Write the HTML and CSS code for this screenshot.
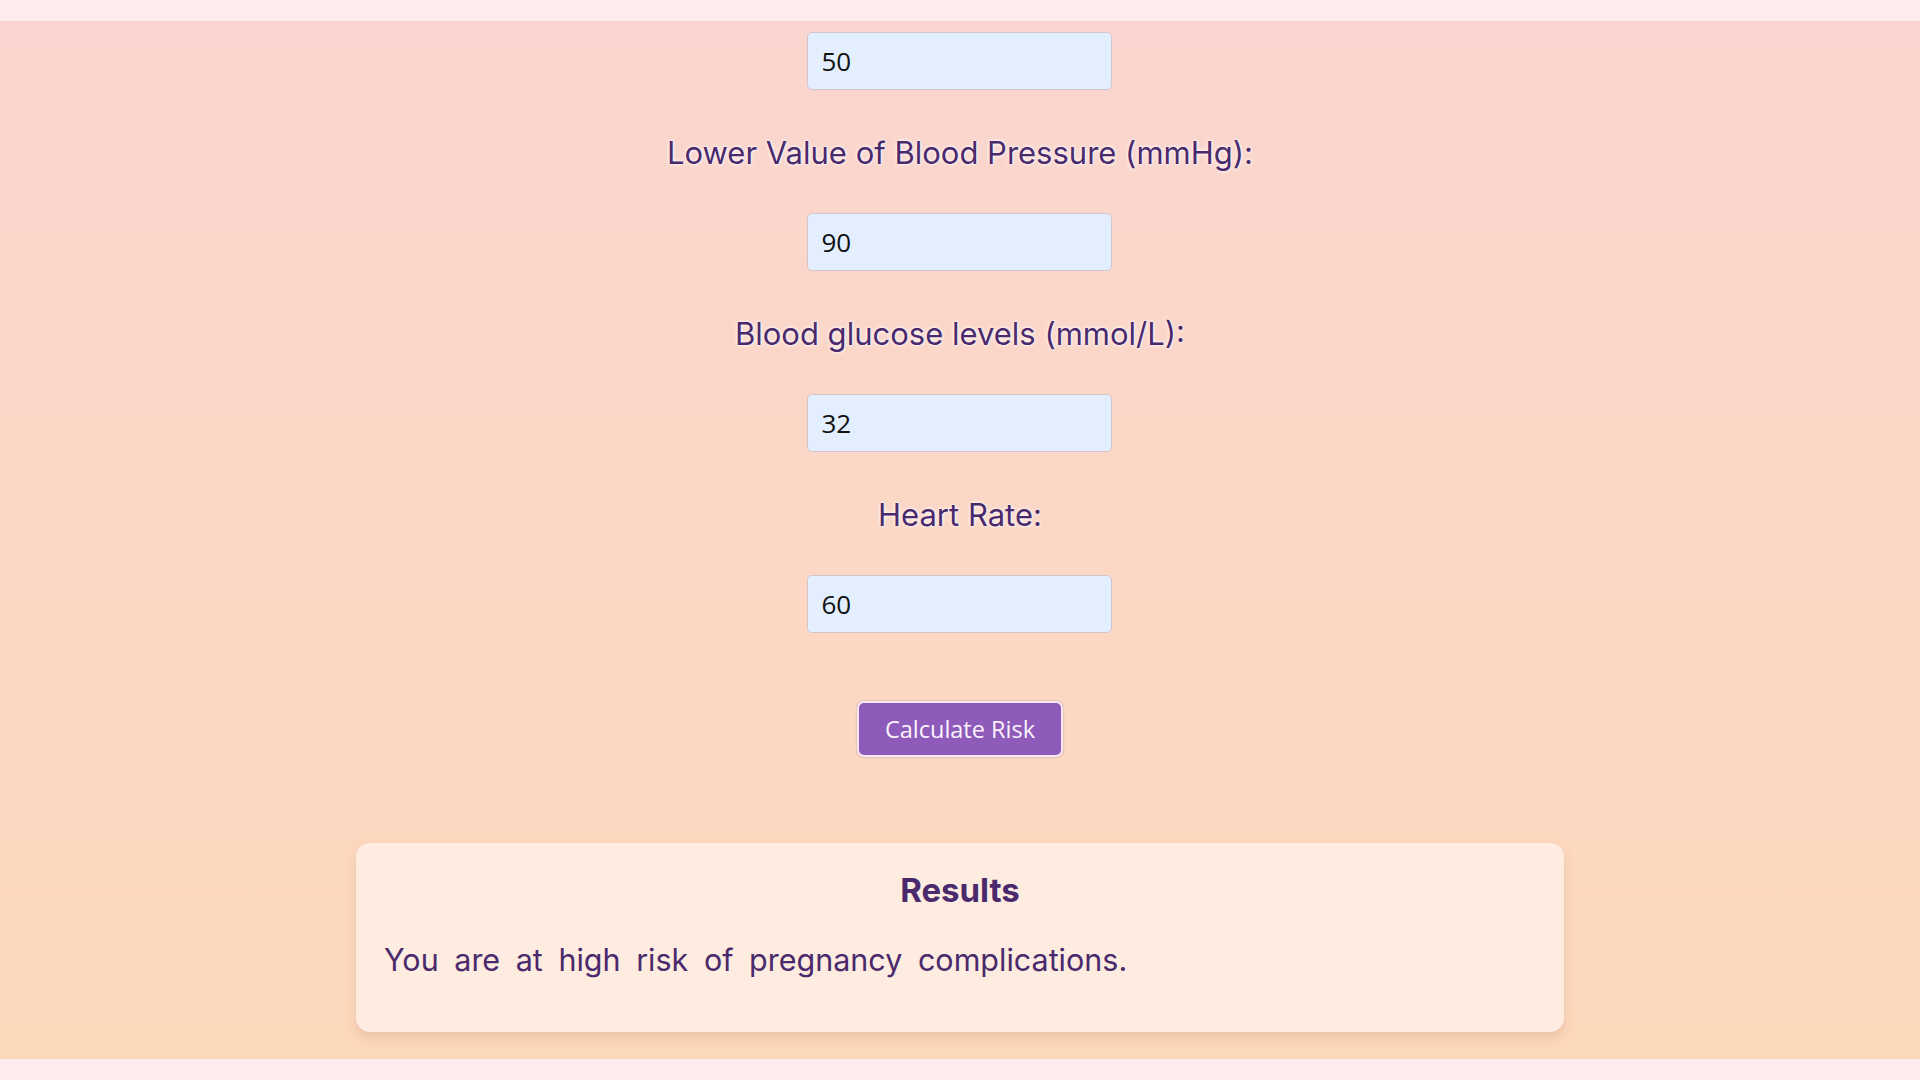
FILE: index.html
```html
<!DOCTYPE html>
<html lang="en">
<head>
<meta charset="utf-8">
<title>Pregnancy Risk Calculator</title>
<link rel="stylesheet" href="styles.css">
</head>
<body>
<main class="page">
  <form class="form" onsubmit="return false;">
    <input class="field" type="text" value="50">
    <label class="label">Lower Value of Blood Pressure (mmHg):</label>
    <input class="field" type="text" value="90">
    <label class="label">Blood glucose levels (mmol/L):</label>
    <input class="field" type="text" value="32">
    <label class="label">Heart Rate:</label>
    <input class="field" type="text" value="60">
    <button class="btn" type="button">Calculate Risk</button>
  </form>
  <section class="results">
    <h2 class="results-title">Results</h2>
    <p class="results-text">You are at high risk of pregnancy complications.</p>
  </section>
</main>
</body>
</html>
```

FILE: styles.css
```css
html, body {
  margin: 0;
  padding: 0;
}
body {
  background: #fdebee;
  padding: 21px 0;
  font-family: "Inter", "Noto Sans", sans-serif;
}
.page {
  height: 1038px;
  box-sizing: border-box;
  background: linear-gradient(180deg, #fad5cf 0%, #fdd9bc 100%);
  display: flex;
  flex-direction: column;
  align-items: center;
  padding-top: 11px;
}
.form {
  display: flex;
  flex-direction: column;
  align-items: center;
}
.field {
  box-sizing: border-box;
  width: 305px;
  height: 58px;
  margin: 0;
  padding: 0 13px;
  border: 1px solid #d2c6cc;
  border-radius: 5px;
  background: #e3efff;
  font-family: "Open Sans", "Noto Sans", sans-serif;
  font-size: 26px;
  color: #111;
  outline: none;
}
.label {
  display: block;
  margin: 46px 0 43px;
  line-height: 34px;
  font-size: 31px;
  color: #4a2a6c;
  text-shadow: 0 0 4px #fff, 0 0 2px #fff;
}
.btn {
  margin-top: 68px;
  width: 206px;
  height: 56px;
  box-sizing: border-box;
  border: 2px solid #f6e8f2;
  border-radius: 7px;
  background: #8e5bbb;
  color: #fbf3fb;
  font-family: "Open Sans", "Noto Sans", sans-serif;
  font-size: 23.5px;
  box-shadow: 0 0 2px rgba(90, 40, 120, 0.4);
  cursor: pointer;
}
.results {
  margin-top: 86px;
  width: 1208px;
  height: 189px;
  box-sizing: border-box;
  background: #feece0;
  border-radius: 14px;
  box-shadow: 0 6px 12px rgba(190, 130, 100, 0.25);
  padding: 27px 28px 0;
}
.results-title {
  margin: 0;
  text-align: center;
  font-size: 33px;
  line-height: 40px;
  font-weight: 700;
  color: #4a2a6c;
}
.results-text {
  margin: 30px 0 0;
  font-size: 30.5px;
  line-height: 40px;
  color: #4a2a6c;
  word-spacing: 7px;
}
```
